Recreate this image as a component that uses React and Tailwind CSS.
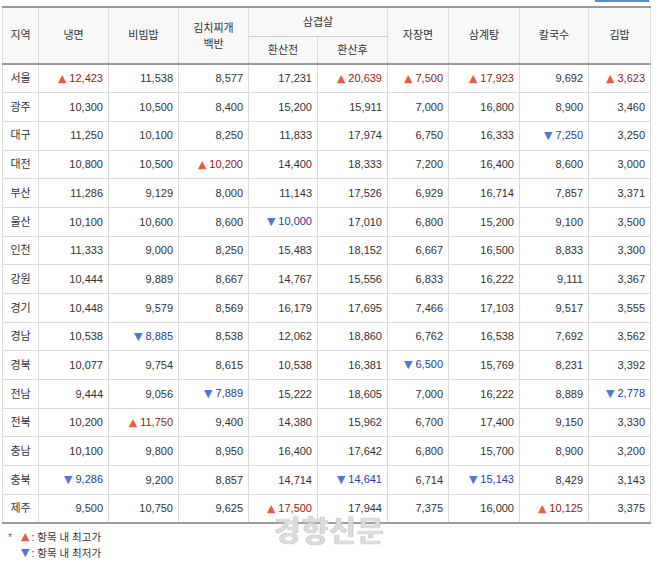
import React from 'react';

const rows = [
  ['서울', '^12,423', '11,538', '8,577', '17,231', '^20,639', '^7,500', '^17,923', '9,692', '^3,623'],
  ['광주', '10,300', '10,500', '8,400', '15,200', '15,911', '7,000', '16,800', '8,900', '3,460'],
  ['대구', '11,250', '10,100', '8,250', '11,833', '17,974', '6,750', '16,333', 'v7,250', '3,250'],
  ['대전', '10,800', '10,500', '^10,200', '14,400', '18,333', '7,200', '16,400', '8,600', '3,000'],
  ['부산', '11,286', '9,129', '8,000', '11,143', '17,526', '6,929', '16,714', '7,857', '3,371'],
  ['울산', '10,100', '10,600', '8,600', 'v10,000', '17,010', '6,800', '15,200', '9,100', '3,500'],
  ['인천', '11,333', '9,000', '8,250', '15,483', '18,152', '6,667', '16,500', '8,833', '3,300'],
  ['강원', '10,444', '9,889', '8,667', '14,767', '15,556', '6,833', '16,222', '9,111', '3,367'],
  ['경기', '10,448', '9,579', '8,569', '16,179', '17,695', '7,466', '17,103', '9,517', '3,555'],
  ['경남', '10,538', 'v8,885', '8,538', '12,062', '18,860', '6,762', '16,538', '7,692', '3,562'],
  ['경북', '10,077', '9,754', '8,615', '10,538', '16,381', 'v6,500', '15,769', '8,231', '3,392'],
  ['전남', '9,444', '9,056', 'v7,889', '15,222', '18,605', '7,000', '16,222', '8,889', 'v2,778'],
  ['전북', '10,200', '^11,750', '9,400', '14,380', '15,962', '6,700', '17,400', '9,150', '3,330'],
  ['충남', '10,100', '9,800', '8,950', '16,400', '17,642', '6,800', '15,700', '8,900', '3,200'],
  ['충북', 'v9,286', '9,200', '8,857', '14,714', 'v14,641', '6,714', 'v15,143', '8,429', '3,143'],
  ['제주', '9,500', '10,750', '9,625', '^17,500', '17,944', '7,375', '16,000', '^10,125', '3,375'],
];

const widths = [36, 70, 70, 70, 69, 70, 61, 71, 69, 62];
const tri = { fontFamily: '"DejaVu Sans", sans-serif' };

function Cell({ value }) {
  if (value.startsWith('^')) {
    return (
      <span className="text-[#8e1b1b]">
        <span className="text-[#ea5a3c] text-[11px] mr-[3px]" style={tri}>▲</span>
        {value.slice(1)}
      </span>
    );
  }
  if (value.startsWith('v')) {
    return (
      <span className="text-[#23429a]">
        <span className="text-[#4f78d6] text-[11px] mr-[3px]" style={tri}>▼</span>
        {value.slice(1)}
      </span>
    );
  }
  return <span>{value}</span>;
}

export default function App() {
  const font = { fontFamily: '"Liberation Sans", "Noto Sans CJK KR", sans-serif' };
  return (
    <div className="relative w-[658px] h-[564px] bg-white text-[#333] text-[11px]" style={font}>
      <div className="flex justify-end pr-[9px] h-[6px]">
        <div className="w-[54px] h-[2px] bg-[#4a8fdc]" />
      </div>
      <div className="pl-[2px]">
        <table className="table-fixed border-collapse w-[648px] border-t-2 border-t-[#9a9a9a] border-b-2 border-b-[#9a9a9a]">
          <colgroup>
            {widths.map((w, i) => (
              <col key={i} style={{ width: w }} />
            ))}
          </colgroup>
          <thead className="bg-[#f8f8f8]">
            <tr className="h-[29px]">
              <th rowSpan={2} className="font-normal border-l border-r border-[#dcdcdc] border-b-2 border-b-[#9a9a9a]">지역</th>
              <th rowSpan={2} className="font-normal border-r border-[#dcdcdc] border-b-2 border-b-[#9a9a9a]">냉면</th>
              <th rowSpan={2} className="font-normal border-r border-[#dcdcdc] border-b-2 border-b-[#9a9a9a]">비빔밥</th>
              <th rowSpan={2} className="font-normal border-r border-[#dcdcdc] border-b-2 border-b-[#9a9a9a] leading-[16px]">
                김치찌개
                <br />
                백반
              </th>
              <th colSpan={2} className="font-normal border-r border-[#dcdcdc] border-b border-b-[#cfcfcf]">삼겹살</th>
              <th rowSpan={2} className="font-normal border-r border-[#dcdcdc] border-b-2 border-b-[#9a9a9a]">자장면</th>
              <th rowSpan={2} className="font-normal border-r border-[#dcdcdc] border-b-2 border-b-[#9a9a9a]">삼계탕</th>
              <th rowSpan={2} className="font-normal border-r border-[#dcdcdc] border-b-2 border-b-[#9a9a9a]">칼국수</th>
              <th rowSpan={2} className="font-normal border-r border-[#dcdcdc] border-b-2 border-b-[#9a9a9a]">김밥</th>
            </tr>
            <tr className="h-[28px]">
              <th className="font-normal border-r border-[#dcdcdc] border-b-2 border-b-[#9a9a9a]">환산전</th>
              <th className="font-normal border-r border-[#dcdcdc] border-b-2 border-b-[#9a9a9a]">환산후</th>
            </tr>
          </thead>
          <tbody>
            {rows.map((row) => (
              <tr key={row[0]} className="h-[28.7px]">
                <td className="text-center border-l border-r border-b border-[#dcdcdc]">{row[0]}</td>
                {row.slice(1).map((v, i) => (
                  <td key={i} className="text-right pr-[5px] border-r border-b border-[#dcdcdc]">
                    <Cell value={v} />
                  </td>
                ))}
              </tr>
            ))}
          </tbody>
        </table>
      </div>
      <div className="pl-[8px] pt-[5px] text-[10.5px] leading-[16px] text-[#333]">
        <div className="flex items-center">
          <span className="w-[13px] text-[#666]">*</span>
          <span className="text-[#ea5a3c] text-[11px] mr-[2px]" style={tri}>▲</span>
          <span>: 항목 내 최고가</span>
        </div>
        <div className="flex items-center">
          <span className="w-[13px]" />
          <span className="text-[#4f78d6] text-[11px] mr-[2px]" style={tri}>▼</span>
          <span>: 항목 내 최저가</span>
        </div>
      </div>
      <div
        className="absolute left-[274px] top-[511px] text-[29px] font-bold tracking-[1px] text-[#dcdcdc]"
        style={{ textShadow: '0 0 1px #808080, 0 0 2px #fff' }}
      >
        경향신문
      </div>
    </div>
  );
}
